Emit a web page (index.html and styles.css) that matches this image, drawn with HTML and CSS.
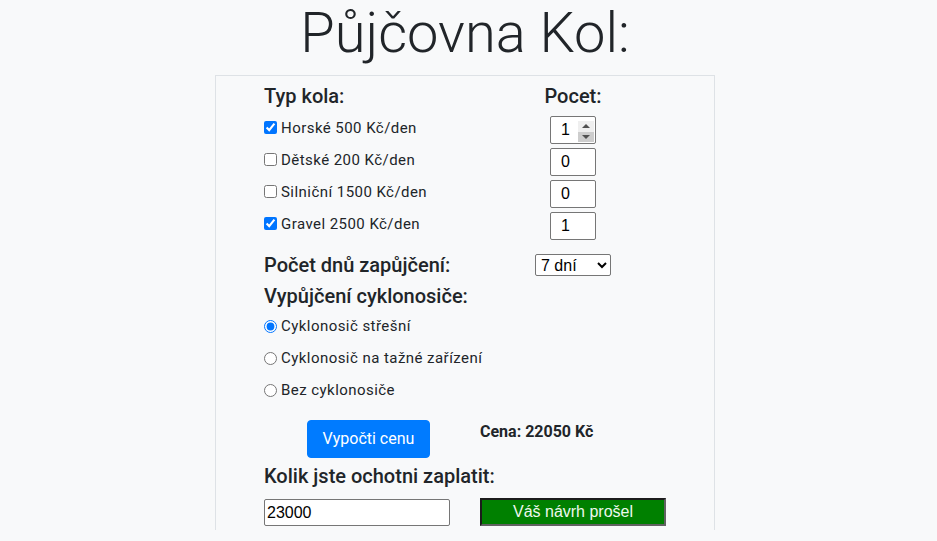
FILE: index.html
```html
<!DOCTYPE html>
<html lang="cs">
<head>
<meta charset="utf-8">
<title>Půjčovna Kol</title>
<link rel="stylesheet" href="styles.css">
</head>
<body>
<div class="page">
  <h1 class="title">Půjčovna Kol:</h1>
  <form class="card">
    <div class="bikes">
      <h5 class="head">Typ kola:</h5>
      <h5 class="head center">Pocet:</h5>

      <label class="opt"><input type="checkbox" checked>Horské 500 Kč/den</label>
      <div class="numcell">
        <span class="numwrap"><input class="num" type="number" value="1"><span class="spin"><span class="up"></span><span class="down"></span></span></span>
      </div>

      <label class="opt"><input type="checkbox">Dětské 200 Kč/den</label>
      <div class="numcell"><input class="num" type="number" value="0"></div>

      <label class="opt"><input type="checkbox">Silniční 1500 Kč/den</label>
      <div class="numcell"><input class="num" type="number" value="0"></div>

      <label class="opt"><input type="checkbox" checked>Gravel 2500 Kč/den</label>
      <div class="numcell"><input class="num" type="number" value="1"></div>
    </div>

    <div class="days">
      <h5 class="head">Počet dnů zapůjčení:</h5>
      <div class="numcell">
        <select class="sel">
          <option>1 den</option>
          <option selected>7 dní</option>
          <option>14 dní</option>
        </select>
      </div>
    </div>

    <h5 class="head carrier">Vypůjčení cyklonosiče:</h5>
    <div class="radios">
      <label class="ropt"><input type="radio" name="c" checked>Cyklonosič střešní</label>
      <label class="ropt"><input type="radio" name="c">Cyklonosič na tažné zařízení</label>
      <label class="ropt"><input type="radio" name="c">Bez cyklonosiče</label>
    </div>

    <div class="actions">
      <div class="btncell"><button type="button" class="btn">Vypočti cenu</button></div>
      <div class="price">Cena: 22050 Kč</div>
    </div>

    <h5 class="head offer">Kolik jste ochotni zaplatit:</h5>
    <div class="bottom">
      <input class="pay" type="text" value="23000">
      <div class="result">Váš návrh prošel</div>
    </div>
  </form>
</div>
</body>
</html>
```

FILE: styles.css
```css
* { box-sizing: border-box; }

html, body {
  margin: 0;
  padding: 0;
  background: #f8f9fa;
  color: #212529;
  font-family: "Roboto", "Liberation Sans", sans-serif;
  font-size: 16px;
}

.page {
  width: 930px;
  display: flex;
  flex-direction: column;
  align-items: center;
}

.title {
  margin: 0;
  font-weight: 300;
  font-size: 56px;
  line-height: 1.2;
  color: #212529;
}

.card {
  width: 500px;
  height: 455px;
  margin-top: 8px;
  border: 1px solid #dee2e6;
  border-bottom: none;
  padding: 8px 0 0 48px;
  display: flex;
  flex-direction: column;
}

.head {
  margin: 0;
  font-size: 20px;
  font-weight: 500;
  line-height: 24px;
  color: #212529;
}

.center { text-align: center; }

.bikes {
  display: grid;
  grid-template-columns: 271px 76px;
  grid-template-rows: 28px repeat(4, 28px);
  row-gap: 4px;
}

.bikes .head { height: 24px; margin-bottom: 4px; }

.opt, .ropt {
  display: flex;
  align-items: center;
  font-size: 15px;
  letter-spacing: 0.45px;
  line-height: 20px;
  color: #212529;
}

.opt { padding-bottom: 5px; }

.opt input, .ropt input {
  width: 13px;
  height: 13px;
  margin: 0 4px 0 0;
  accent-color: #0075ff;
}

.numcell {
  display: flex;
  justify-content: center;
  align-items: center;
}

.numwrap {
  position: relative;
  display: inline-block;
}

.num {
  width: 46px;
  height: 28px;
  border: 1px solid #767676;
  border-radius: 2px;
  background: #fff;
  padding: 0 4px 0 10px;
  font-family: "Liberation Sans", Arial, sans-serif;
  font-size: 16px;
  color: #000;
  margin: 0;
  -moz-appearance: textfield;
}

.num::-webkit-inner-spin-button,
.num::-webkit-outer-spin-button {
  -webkit-appearance: none;
  margin: 0;
}

.spin {
  position: absolute;
  right: 2px;
  top: 5px;
  width: 16px;
  height: 21px;
  display: flex;
  flex-direction: column;
}

.spin .up, .spin .down {
  flex: 1;
  position: relative;
}

.spin .up { background: #efefef; }
.spin .down { background: #cdcdcd; }

.spin .up::after, .spin .down::after {
  content: "";
  position: absolute;
  left: 4px;
  border-left: 4px solid transparent;
  border-right: 4px solid transparent;
}

.spin .up::after { top: 3px; border-bottom: 4px solid #505050; }
.spin .down::after { top: 3px; border-top: 4px solid #505050; }

.days {
  display: grid;
  grid-template-columns: 271px 76px;
  align-items: center;
  height: 24px;
  margin-top: 13px;
}

.sel {
  width: 76px;
  height: 22px;
  border: 1px solid #767676;
  border-radius: 2px;
  background: #fff;
  font-family: "Liberation Sans", Arial, sans-serif;
  font-size: 16px;
  color: #000;
  padding: 0 0 0 1px;
  margin: 0;
}

.carrier { margin-top: 7px; }

.radios {
  display: flex;
  flex-direction: column;
  margin-top: 2px;
}

.ropt { height: 32px; }

.actions {
  display: grid;
  grid-template-columns: 216px auto;
  align-items: start;
  margin-top: 14px;
}

.btncell { padding-left: 43px; }

.btn {
  width: 123px;
  height: 38px;
  border: 1px solid #007bff;
  border-radius: 4px;
  background: #007bff;
  color: #fff;
  font-family: "Roboto", "Liberation Sans", sans-serif;
  font-size: 16px;
  line-height: 24px;
  padding: 6px 12px;
  margin: 0;
}

.price {
  font-weight: 700;
  font-size: 16px;
  line-height: 24px;
  color: #212529;
}

.offer { margin-top: 6px; }

.bottom {
  display: grid;
  grid-template-columns: 186px 186px;
  column-gap: 30px;
  align-items: start;
  margin-top: 10px;
}

.pay {
  width: 186px;
  height: 27px;
  margin: 1px 0 0 0;
  border: 1px solid #767676;
  border-radius: 2px;
  background: #fff;
  padding: 1px 2px;
  font-family: "Liberation Sans", Arial, sans-serif;
  font-size: 16px;
  color: #000;
}

.result {
  width: 186px;
  height: 28px;
  background: #008000;
  border: 2px solid;
  border-color: #1c1c1c #626262 #626262 #1c1c1c;
  color: #eef8ee;
  font-family: "Liberation Sans", Arial, sans-serif;
  font-size: 16px;
  line-height: 24px;
  text-align: center;
}
```
